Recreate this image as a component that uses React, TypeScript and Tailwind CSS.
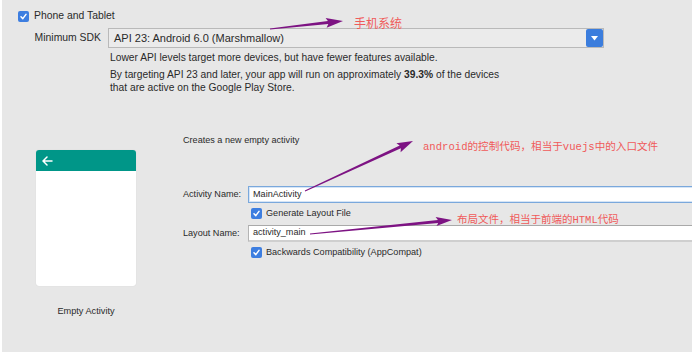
import React from "react";

function Check() {
  return (
    <span className="flex h-[11px] w-[11px] shrink-0 items-center justify-center rounded-[2px] bg-[#3d7ee0]">
      <svg width="9" height="9" viewBox="0 0 9 9">
        <polyline points="2,4.8 3.8,6.6 7,2.4" fill="none" stroke="white" strokeWidth="1.5" strokeLinecap="round" strokeLinejoin="round" />
      </svg>
    </span>
  );
}

function arrowPoints(x1: number, y1: number, x2: number, y2: number, L: number, H: number, w0: number, w1: number) {
  const dx = x2 - x1;
  const dy = y2 - y1;
  const len = Math.hypot(dx, dy);
  const ux = dx / len;
  const uy = dy / len;
  const nx = -uy;
  const ny = ux;
  const bx = x2 - ux * L;
  const by = y2 - uy * L;
  const pts = [
    [x1 + (nx * w0) / 2, y1 + (ny * w0) / 2],
    [bx + (nx * w1) / 2, by + (ny * w1) / 2],
    [bx + nx * H - ux * 2, by + ny * H - uy * 2],
    [x2, y2],
    [bx - nx * H - ux * 2, by - ny * H - uy * 2],
    [bx - (nx * w1) / 2, by - (ny * w1) / 2],
    [x1 - (nx * w0) / 2, y1 - (ny * w0) / 2],
  ];
  return pts.map((p) => p[0].toFixed(1) + "," + p[1].toFixed(1)).join(" ");
}

export default function App() {
  return (
    <div className="relative h-[352px] w-[692px] overflow-hidden border-l-2 border-white bg-[#e7e7e7] font-['Liberation_Sans',Arial,sans-serif] text-[#2a2a2a]">
      {/* Upper section */}
      <div className="pt-[10px]">
        <div className="flex h-[12px] items-center gap-[5px] pl-[16px] text-[10.4px]">
          <Check />
          <span>Phone and Tablet</span>
        </div>
        <div className="mt-[6px] flex h-[20px] items-center text-[10.4px]">
          <span className="w-[99px] text-right">Minimum SDK</span>
          <div className="ml-[7px] flex h-[20px] w-[496px] items-center border border-[#b9b9b9] bg-[#ebebeb] pl-[5px] text-[11px]">
            <span className="flex-1">API 23: Android 6.0 (Marshmallow)</span>
            <span className="flex h-[18px] w-[17px] items-center justify-center rounded-[2px] bg-[#3b7ddd]">
              <svg width="7" height="5" viewBox="0 0 7 5">
                <polygon points="0,0 7,0 3.5,4.5" fill="white" />
              </svg>
            </span>
          </div>
        </div>
        <div className="mt-[4px] pl-[108px] text-[10.25px]">
          <div className="h-[12px] leading-[12px]">Lower API levels target more devices, but have fewer features available.</div>
          <div className="mt-[4px] leading-[13px]">
            By targeting API 23 and later, your app will run on approximately <b>39.3%</b> of the devices
          </div>
          <div className="leading-[13px]">that are active on the Google Play Store.</div>
        </div>
      </div>

      {/* Lower section */}
      <div className="mt-[40px] flex">
        <div className="w-[181px] shrink-0 pl-[34px]">
          <div className="mt-[16px] h-[136px] w-[100px] overflow-hidden rounded-[3px] bg-white shadow-[0_0_1px_rgba(0,0,0,0.15)]">
            <div className="flex h-[21px] items-center bg-[#009688] pl-[6px]">
              <svg width="11" height="10" viewBox="0 0 11 10">
                <path d="M10 5H1.5M5 1L1 5l4 4" fill="none" stroke="white" strokeWidth="1.5" strokeLinecap="round" strokeLinejoin="round" />
              </svg>
            </div>
          </div>
          <div className="mt-[19px] h-[12px] w-[100px] text-center text-[9.2px] leading-[12px]">Empty Activity</div>
        </div>
        <div className="flex-1 text-[9.1px]">
          <div className="h-[12px] leading-[12px]">Creates a new empty activity</div>
          <div className="mt-[40px] flex h-[17px] items-center">
            <span className="w-[65px] shrink-0">Activity Name:</span>
            <div className="-mr-[4px] flex h-[17px] flex-1 items-center border border-[#7aa8dc] bg-white pl-[4px] shadow-[inset_0_0_0_1px_#d6e5f6]">
              MainActivity
            </div>
          </div>
          <div className="ml-[68px] mt-[5px] flex h-[11px] items-center gap-[4px]">
            <Check />
            <span>Generate Layout File</span>
          </div>
          <div className="mt-[6px] flex h-[17px] items-center">
            <span className="w-[65px] shrink-0">Layout Name:</span>
            <div className="-mr-[4px] flex h-[17px] flex-1 items-center border-b-2 border-l border-t border-b-[#cfcfcf] border-l-[#b4b4b4] border-t-[#a9a9a9] bg-white pl-[4px]">
              activity_main
            </div>
          </div>
          <div className="ml-[68px] mt-[5px] flex h-[11px] items-center gap-[4px]">
            <Check />
            <span>Backwards Compatibility (AppCompat)</span>
          </div>
        </div>
      </div>

      {/* Annotations */}
      <svg className="pointer-events-none absolute left-[-2px] top-0" width="692" height="352">
        <polygon points={arrowPoints(270, 29, 343, 21, 15, 5, 1, 3)} fill="#7d1383" />
        <polygon points={arrowPoints(305, 191, 413, 141, 14, 5, 1, 3)} fill="#7d1383" />
        <polygon points={arrowPoints(310, 234, 452, 220, 14, 4.5, 1, 3)} fill="#7d1383" />
      </svg>
      <div className="absolute left-[352px] top-[15px] font-['Noto_Sans_CJK_SC',sans-serif] text-[12px] leading-[16px] text-[#f05a5a]">
        手机系统
      </div>
      <div className="absolute left-[421px] top-[140px] font-['Liberation_Mono','Noto_Sans_CJK_SC',monospace] text-[10.6px] leading-[14px] text-[#f05a5a]">
        android的控制代码，相当于vuejs中的入口文件
      </div>
      <div className="absolute left-[455px] top-[213px] font-['Liberation_Mono','Noto_Sans_CJK_SC',monospace] text-[10.5px] leading-[14px] text-[#f05a5a]">
        布局文件，相当于前端的HTML代码
      </div>
    </div>
  );
}
